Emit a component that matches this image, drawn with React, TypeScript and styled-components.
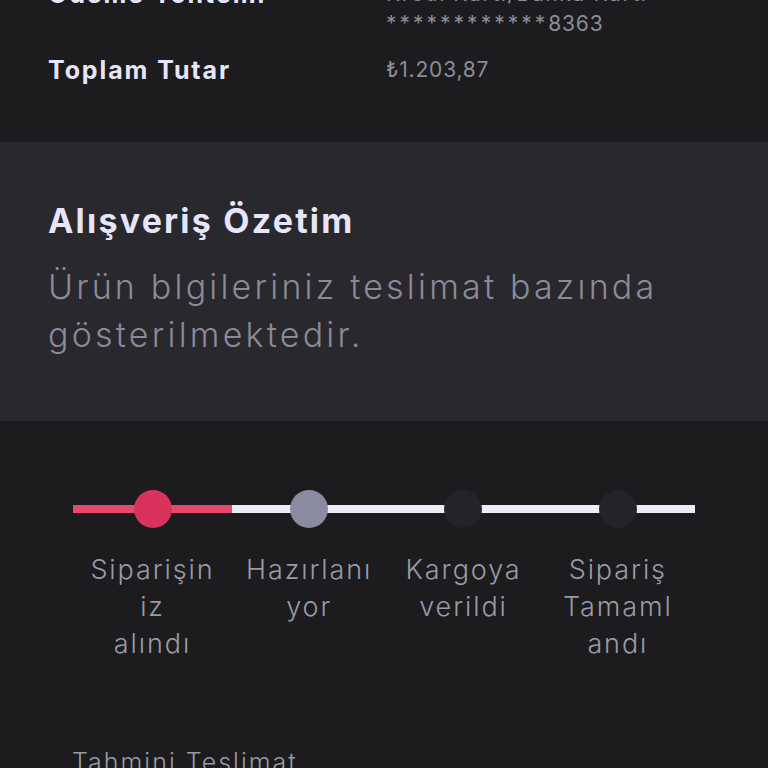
import styled, { createGlobalStyle } from "styled-components";

const GlobalStyle = createGlobalStyle`
  html, body {
    margin: 0;
    padding: 0;
    background: #1c1c1e;
  }
  body {
    width: 768px;
    height: 768px;
    overflow: hidden;
    font-family: "Inter", "Noto Sans", sans-serif;
  }
`;

const Page = styled.div`
  display: flex;
  flex-direction: column;
  margin-top: -21px;
`;

const InfoSection = styled.section`
  background: #1c1c1e;
  padding: 0 48px 57px;
  display: flex;
  flex-direction: column;
  gap: 16px;
`;

const InfoRow = styled.div`
  display: grid;
  grid-template-columns: 338px 1fr;
`;

const InfoLabel = styled.div`
  font-family: "Inter", sans-serif;
  font-weight: 700;
  font-size: 25px;
  line-height: 30px;
  letter-spacing: 1.9px;
  color: #e6e6f8;
`;

const InfoValue = styled.div`
  font-family: "Inter", sans-serif;
  font-weight: 400;
  font-size: 21px;
  line-height: 30px;
  letter-spacing: 0.8px;
  color: #8c8c9a;
`;

const ValueLine = styled.span<{ $wide?: boolean }>`
  display: block;
  letter-spacing: ${(p) => (p.$wide ? "1.6px" : "inherit")};
`;

const Mask = styled.span`
  letter-spacing: 3px;
`;

const SummarySection = styled.section`
  background: #28282d;
  padding: 57px 48px 62px;
`;

const SummaryTitle = styled.h2`
  margin: 0 0 20px;
  font-family: "Inter", sans-serif;
  font-weight: 700;
  font-size: 34px;
  line-height: 44px;
  letter-spacing: 2.2px;
  color: #e6e6f8;
`;

const SummaryText = styled.p`
  margin: 0;
  font-family: "Inter", sans-serif;
  font-weight: 300;
  font-size: 34px;
  line-height: 48px;
  letter-spacing: 3.2px;
  color: #8a8a98;
`;

const TrackerSection = styled.section`
  background: #1c1c1e;
  padding: 69px 73px 0;
`;

const Track = styled.div`
  display: grid;
  grid-template-columns: 159px 1fr 1fr 1fr;
`;

const Step = styled.div`
  display: flex;
  flex-direction: column;
  align-items: center;
`;

const StepBar = styled.div<{ $active: boolean }>`
  width: 100%;
  height: 38px;
  display: flex;
  align-items: center;
  justify-content: center;
  background: linear-gradient(
    to bottom,
    transparent 15px,
    ${(p) => (p.$active ? "#e8496a" : "#ececf4")} 15px,
    ${(p) => (p.$active ? "#e8496a" : "#ececf4")} 23px,
    transparent 23px
  );
`;

const Dot = styled.div<{ $color: string }>`
  width: 38px;
  height: 38px;
  border-radius: 50%;
  background: ${(p) => p.$color};
`;

const StepLabel = styled.div`
  margin-top: 23px;
  display: flex;
  flex-direction: column;
  align-items: center;
  font-family: "Inter", sans-serif;
  font-weight: 300;
  font-size: 27px;
  line-height: 37px;
  letter-spacing: 1.9px;
  color: #9a9aa6;
  white-space: nowrap;
`;

const Estimate = styled.div`
  margin-top: 85px;
  padding-left: 72px;
  font-family: "Inter", sans-serif;
  font-weight: 300;
  font-size: 25px;
  line-height: 30px;
  letter-spacing: 2px;
  color: #9a9aa6;
`;

const steps = [
  { lines: ["Siparişin", "iz", "alındı"], color: "#d9325c", active: true },
  { lines: ["Hazırlanı", "yor"], color: "#8a8aa0", active: false },
  { lines: ["Kargoya", "verildi"], color: "#242428", active: false },
  { lines: ["Sipariş", "Tamaml", "andı"], color: "#242428", active: false },
];

export default function App() {
  return (
    <>
      <GlobalStyle />
      <Page>
        <InfoSection>
          <InfoRow>
            <InfoLabel>Ödeme Yöntemi</InfoLabel>
            <InfoValue>
              <ValueLine $wide>Kredi Kartı/Banka Kartı</ValueLine>
              <ValueLine>
                <Mask>************</Mask>8363
              </ValueLine>
            </InfoValue>
          </InfoRow>
          <InfoRow>
            <InfoLabel>Toplam Tutar</InfoLabel>
            <InfoValue>₺1.203,87</InfoValue>
          </InfoRow>
        </InfoSection>
        <SummarySection>
          <SummaryTitle>Alışveriş Özetim</SummaryTitle>
          <SummaryText>Ürün blgileriniz teslimat bazında gösterilmektedir.</SummaryText>
        </SummarySection>
        <TrackerSection>
          <Track>
            {steps.map((s) => (
              <Step key={s.lines.join(" ")}>
                <StepBar $active={s.active}>
                  <Dot $color={s.color} />
                </StepBar>
                <StepLabel>
                  {s.lines.map((line) => (
                    <span key={line}>{line}</span>
                  ))}
                </StepLabel>
              </Step>
            ))}
          </Track>
        </TrackerSection>
        <Estimate>Tahmini Teslimat</Estimate>
      </Page>
    </>
  );
}
